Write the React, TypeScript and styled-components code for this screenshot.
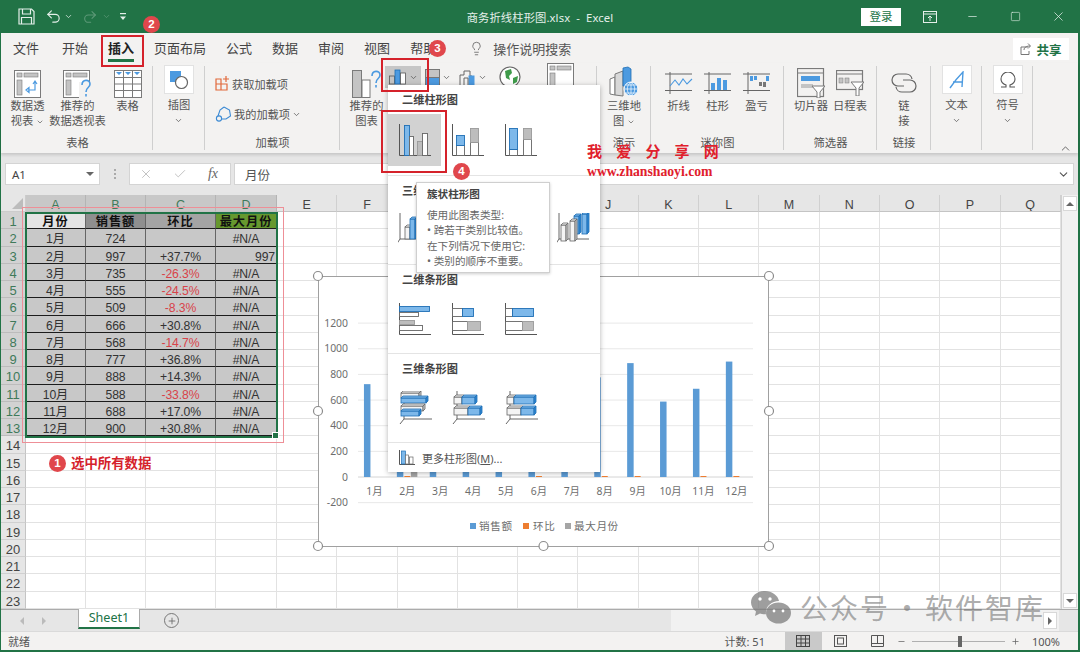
import React from 'react';
import styled, { createGlobalStyle } from 'styled-components';
import { Undo2, Redo2, Lightbulb, Minus, Square, X, ChevronDown, ChevronUp, Check, Plus } from 'lucide-react';

const GREEN = '#217346';
const FONT = `"Noto Sans", "Noto Sans CJK SC", sans-serif`;

const Global = createGlobalStyle`
  html, body { margin: 0; padding: 0; background: #fff; }
  * { box-sizing: border-box; }
`;

const Window = styled.div`
  position: relative; width: 1080px; height: 652px; overflow: hidden;
  display: flex; flex-direction: column; background: ${GREEN};
  font-family: ${FONT}; color: #444;
  padding: 0 2px 2px 1px;
`;

/* ---------- title bar ---------- */
const TitleBar = styled.header`
  height: 33px; margin: 0 -2px 0 -1px; background: ${GREEN}; color: #e4efe9;
  display: grid; grid-template-columns: 1fr auto 1fr; align-items: center; flex: none;
`;
const Quick = styled.div`display: flex; align-items: center; padding-left: 18px;`;
const QuickIcon = styled.span<{ $w: number; $dim?: boolean }>`
  width: ${p => p.$w}px; display: flex; align-items: center; opacity: ${p => (p.$dim ? 0.3 : 1)};
`;
const DocTitle = styled.div`font-size: 11.3px; letter-spacing: 0.1px; white-space: pre;`;
const WinControls = styled.div`display: flex; align-items: center; justify-content: flex-end;`;
const Login = styled.button`
  width: 40px; height: 18px; border: 0; padding: 0; background: #fff; color: ${GREEN};
  font: 11.5px ${FONT}; margin-right: 7px; line-height: 18px;
`;
const WinBtn = styled.span`width: 43px; display: flex; justify-content: center; color: #e4efe9;`;

/* ---------- tabs ---------- */
const TabRow = styled.nav`
  height: 30px; flex: none; display: flex; align-items: center; gap: 20px; padding-left: 12px; position: relative; background: #f3f2f1;
`;
const Tab = styled.span<{ $active?: boolean }>`
  position: relative; font-size: 13px; line-height: 30px; white-space: nowrap;
  color: ${p => (p.$active ? '#222' : '#444')}; font-weight: ${p => (p.$active ? 700 : 400)};
  &:first-child { margin-right: 3px; }
  ${p => p.$active && `&::after { content: ''; position: absolute; left: 0; right: 0; bottom: 1px; height: 3px; background: ${GREEN}; }`}
`;
const TellMe = styled.span`
  display: flex; align-items: center; gap: 9px; margin-left: 13px; font-size: 13px; color: #555; white-space: nowrap;
`;
const ShareBtn = styled.button`
  position: absolute; right: 9px; top: 5px; width: 56px; height: 22px; border: 0; background: #fff;
  display: flex; align-items: center; justify-content: center; gap: 4px; padding: 0;
  font: 700 12.5px ${FONT}; color: ${GREEN};
`;

/* ---------- ribbon ---------- */
const Ribbon = styled.section`
  position: relative; height: 90px; flex: none; display: flex; padding-left: 1px;
  box-shadow: 0 2px 3px rgba(0,0,0,.14); z-index: 1; background: #f3f2f1;
`;
const Group = styled.div<{ $w: number }>`
  width: ${p => p.$w}px; flex: none; display: flex; flex-direction: column; position: relative;
  &::after { content: ''; position: absolute; right: 0; top: 3px; bottom: 3px; width: 1px; background: #cfcfcf; }
`;
const GroupBody = styled.div`height: 71px; display: flex; align-items: flex-start; justify-content: center;`;
const GroupLabel = styled.div`height: 18px; line-height: 18px; font-size: 11.3px; text-align: center; color: #555;`;
const BigBtn = styled.div<{ $w: number; $top?: number }>`
  width: ${p => p.$w}px; flex: none; display: flex; flex-direction: column; align-items: center;
  padding-top: ${p => p.$top ?? 7}px;
`;
const BigIcon = styled.div`height: 28px; display: flex; align-items: center; justify-content: center;`;
const BoxIcon = styled.div`
  width: 30px; height: 29px; background: #fff; border: 1px solid #e2e2e2;
  display: flex; align-items: center; justify-content: center;
`;
const BtnLabel = styled.div<{ $gap?: number }>`
  margin-top: ${p => p.$gap ?? 0}px; font-size: 11.3px; line-height: 15px; text-align: center; white-space: nowrap; color: #555;
  svg { vertical-align: -1px; }
`;
const AddIns = styled.div`height: 71px; width: 135px; display: flex; padding: 12px 0 0 10px;`;
const AddInCol = styled.div`width: 99px; display: flex; flex-direction: column; gap: 12px;`;
const AddInRow = styled.div`display: flex; align-items: center; gap: 2px; font-size: 11.2px; white-space: nowrap; color: #555; height: 18px;`;
const AddInIcons = styled.div`display: flex; flex-direction: column; gap: 9px; margin-top: -6px; margin-left: 3px; height: 0;`;
const ChartGroupBody = styled.div`display: flex; align-items: flex-start; padding-left: 8px;`;
const SmallCharts = styled.div`display: flex; align-items: center; padding-top: 3px; gap: 4px;`;
const SmallChart = styled.span<{ $on?: boolean; $w: number }>`
  width: ${p => p.$w}px; height: 22px; display: flex; align-items: center; justify-content: ${p => (p.$on ? 'center' : 'flex-start')}; gap: 2px;
  background: ${p => (p.$on ? '#c6c6c6' : 'transparent')};
`;
const Collapse = styled.span`position: absolute; right: 6px; bottom: -2px; color: #555; display: flex;`;

/* ---------- formula bar ---------- */
const FormulaBar = styled.div`
  height: 42px; flex: none; background: #e6e6e6; padding: 10px 4px 10px 4px; display: flex; align-items: stretch;
`;
const NameBox = styled.div`
  width: 95px; background: #fff; border: 1px solid #d4d4d4; display: flex; align-items: center; justify-content: space-between;
  padding: 0 5px 0 6px; font-size: 11.5px; color: #444;
`;
const Grip = styled.div`
  width: 29px; display: flex; flex-direction: column; gap: 2px; align-items: center; justify-content: center;
  i { width: 2px; height: 2px; background: #aaa; display: block; }
`;
const FxBox = styled.div`
  width: 102px; background: #fff; border: 1px solid #d4d4d4; display: flex; align-items: center; justify-content: space-between; padding: 0 12px 0 9px;
  color: #b5b5b5; font-family: "Liberation Serif", serif; font-style: italic;
`;
const FxText = styled.span`font-size: 14px; color: #666;`;
const FormulaInput = styled.div`
  flex: 1; margin-left: 3px; background: #fff; border: 1px solid #d4d4d4; display: flex; align-items: center; justify-content: space-between;
  padding: 0 3px 0 10px; font-size: 12.5px; color: #555;
`;

/* ---------- sheet ---------- */
const SheetArea = styled.div`flex: none; height: 414px; display: flex; background: #fff;`;
const Grid = styled.div`
  width: 1060px; display: grid; flex: none;
  grid-template-columns: 25px 60px 60px 70px 61px repeat(13, 60.3px);
  grid-template-rows: 17px repeat(23, 17.26px);
`;
const Corner = styled.div`
  background: #e6e6e6; border-right: 1px solid #ccc; border-bottom: 1px solid #ccc; position: relative;
  &::after { content: ''; position: absolute; right: 2px; bottom: 2px; border-style: solid; border-width: 0 0 11px 11px; border-color: transparent transparent #bcbcbc transparent; }
`;
const ColHead = styled.div<{ $sel?: boolean }>`
  background: ${p => (p.$sel ? '#c8c8c8' : '#e6e6e6')}; color: ${p => (p.$sel ? '#3f7a5a' : '#444')};
  border-right: 1px solid ${p => (p.$sel ? '#b4b4b4' : '#d0d0d0')}; overflow: hidden;
  border-bottom: 1px solid #c4c4c4; text-align: center; font-size: 12.5px; line-height: 20px; font-family: "Liberation Sans", sans-serif;
`;
const RowHead = styled.div<{ $sel?: boolean }>`
  background: ${p => (p.$sel ? '#d2d2d2' : '#e6e6e6')}; color: ${p => (p.$sel ? '#3f7a5a' : '#444')};
  border-right: 1px solid #c4c4c4; border-bottom: 1px solid ${p => (p.$sel ? '#bcbcbc' : '#d0d0d0')}; overflow: hidden;
  text-align: center; font-size: 13px; line-height: 19px; font-family: "Liberation Sans", sans-serif;
`;
const Cell = styled.div`border-right: 1px solid #e2e2e2; border-bottom: 1px solid #e2e2e2;`;
const DataCell = styled.div<{ $fill?: string; $red?: boolean; $head?: boolean; $right?: boolean }>`
  background: ${p => p.$fill ?? '#c8c8c8'}; border-right: 1px solid #666; border-bottom: 1px solid #1c1c1c;
  color: ${p => (p.$red ? '#d8434a' : p.$head ? '#111' : '#333')}; font-weight: ${p => (p.$head ? 700 : 400)};
  letter-spacing: ${p => (p.$head ? '1px' : '-0.1px')};
  text-align: ${p => (p.$right ? 'right' : 'center')}; padding-right: ${p => (p.$right ? '1px' : '0')};
  font-size: 12.2px; line-height: 20.5px; white-space: nowrap; overflow: hidden;
  font-family: "Liberation Sans", "Noto Sans CJK SC", sans-serif;
`;
const VScroll = styled.div`
  width: 17px; flex: none; background: #f1f1f1; border-left: 1px solid #d0d0d0; display: flex; flex-direction: column; justify-content: space-between;
`;
const ScrollBtn = styled.div`
  height: 15px; background: #fff; border: 1px solid #d8d8d8; margin: 1px; display: flex; align-items: center; justify-content: center;
`;
const Arrow = styled.i<{ $dir: 'up' | 'down' | 'left' | 'right'; $color?: string }>`
  display: block; width: 0; height: 0; border-style: solid;
  ${p => {
    const c = p.$color ?? '#666';
    if (p.$dir === 'up') return `border-width: 0 4px 4px; border-color: transparent transparent ${c};`;
    if (p.$dir === 'down') return `border-width: 4px 4px 0; border-color: ${c} transparent transparent;`;
    if (p.$dir === 'left') return `border-width: 4px 4px 4px 0; border-color: transparent ${c} transparent transparent;`;
    return `border-width: 4px 0 4px 4px; border-color: transparent transparent transparent ${c};`;
  }}
`;

/* ---------- sheet tabs / status ---------- */
const TabStrip = styled.div`
  height: 22px; flex: none; background: #e6e6e6; border-top: 1px solid #ababab; display: flex; align-items: flex-start;
`;
const TabNav = styled.div`width: 77px; height: 21px; display: flex; align-items: center; gap: 18px; padding-left: 19px; flex: none;`;
const SheetTab = styled.div`
  width: 62px; height: 20px; margin-top: -1px; background: #fff; border: 1px solid #ababab; border-top: 0; border-bottom: 2px solid ${GREEN};
  color: ${GREEN}; font-size: 12.6px; line-height: 17px; text-align: center; flex: none; font-weight: 400;
`;
const AddSheet = styled.div`
  width: 15px; height: 15px; border: 1px solid #777; border-radius: 50%; margin: 3px 0 0 24px; color: #666; display: flex; align-items: center; justify-content: center; flex: none;
`;
const HScroll = styled.div`
  margin-left: auto; width: 388px; height: 21px; background: #f1f1f1; display: flex; justify-content: flex-end; align-items: center; padding-right: 2px;
`;
const HScrollBtn = styled.div`
  width: 14px; height: 17px; background: #fff; border: 1px solid #d8d8d8; display: flex; align-items: center; justify-content: center;
`;
const HSpacer = styled.div`width: 19px; flex: none; background: #e6e6e6; height: 21px;`;
const StatusBar = styled.footer`
  height: 19px; flex: none; background: #f3f2f1; border-top: 1px solid #dadada; display: flex; align-items: center; font-size: 11px; color: #555; padding-left: 7px;
`;
const StatusRight = styled.div`margin-left: auto; display: flex; align-items: center; height: 100%;`;
const Count = styled.span`margin-right: 20px; font-size: 11px;`;
const ViewBtn = styled.span<{ $on?: boolean }>`
  width: 37px; height: 100%; display: flex; align-items: center; justify-content: center; background: ${p => (p.$on ? '#c9c9c9' : 'transparent')};
`;
const ZoomSlider = styled.div`
  display: flex; align-items: center; gap: 6px; margin-left: 1px; color: #666;
`;
const SliderTrack = styled.div`
  position: relative; width: 93px; height: 1px; background: #b0b0b0;
  &::after { content: ''; position: absolute; left: 46px; top: -5px; width: 4px; height: 11px; background: #666; }
`;
const ZoomPct = styled.span`margin: 0 18px 0 12px; font-size: 11px;`;

/* ---------- overlays ---------- */
const ChartLayer = styled.svg`position: absolute; left: 311px; top: 270px; width: 463px; height: 282px; z-index: 2;`;
const RedBox = styled.div<{ $x: number; $y: number; $w: number; $h: number; $thin?: boolean }>`
  position: absolute; left: ${p => p.$x}px; top: ${p => p.$y}px; width: ${p => p.$w}px; height: ${p => p.$h}px;
  border: ${p => (p.$thin ? '1px solid #ee8f97' : '2px solid #d5222b')}; z-index: 6; pointer-events: none;
`;
const Badge = styled.div<{ $x: number; $y: number }>`
  position: absolute; left: ${p => p.$x - 8}px; top: ${p => p.$y - 8}px; width: 17px; height: 17px; border-radius: 50%;
  background: #e0474c; color: #fff; font: 700 11.5px/17px "Liberation Sans", sans-serif; text-align: center; z-index: 7;
`;
const Selection = styled.div`
  position: absolute; left: 25px; top: 212px; width: 253px; height: 226px; border: 2px solid ${GREEN}; z-index: 3;
  &::after { content: ''; position: absolute; right: -3px; bottom: -3px; width: 5px; height: 5px; background: ${GREEN}; border: 1px solid #fff; }
`;
const Note = styled.div`
  position: absolute; left: 71px; top: 454px; font-size: 13.4px; font-weight: 700; line-height: 18px; color: #d5222b; z-index: 4; white-space: nowrap;
`;
const Menu = styled.div`
  position: absolute; left: 388px; top: 85px; width: 212px; height: 387px; background: #fff; z-index: 4;
  box-shadow: 0 1px 5px rgba(0,0,0,.3); display: flex; flex-direction: column;
`;
const MenuSection = styled.div<{ $h: number }>`height: ${p => p.$h}px; border-bottom: 1px solid #e4e4e4; flex: none;`;
const MenuHead = styled.div<{ $first?: boolean }>`
  height: ${p => (p.$first ? 29 : 28)}px; line-height: ${p => (p.$first ? 30 : 29)}px; padding-left: 14px; font-size: 11.2px; font-weight: 700; color: #444;
`;
const IconRow = styled.div`display: flex;`;
const IconCell = styled.div<{ $on?: boolean }>`
  width: 53px; height: 52px; display: flex; align-items: center; justify-content: center; background: ${p => (p.$on ? '#d2d2d2' : 'transparent')};
`;
const MenuFoot = styled.div`
  flex: 1; display: flex; align-items: center; gap: 7px; padding-left: 11px; font-size: 11px; color: #555;
  u { text-underline-offset: 1px; }
`;
const Tooltip = styled.div`
  position: absolute; left: 416px; top: 182px; width: 134px; height: 91px; background: #fff; border: 1px solid #cfcfcf; z-index: 5;
  padding: 3px 0 0 10px; box-shadow: 0 1px 3px rgba(0,0,0,.2); color: #666; font-size: 10.6px; line-height: 15.4px; white-space: nowrap;
`;
const TipTitle = styled.div`font-weight: 700; color: #444; margin-bottom: 6px; line-height: 16px;`;
const Brand = styled.div`
  position: absolute; left: 587px; top: 141px; width: 130px; z-index: 6; color: #e0202c; font-weight: 700;
`;
const BrandCn = styled.div`font: 700 15px/20px "Noto Sans CJK SC", sans-serif; letter-spacing: 14.2px; white-space: nowrap;`;
const BrandUrl = styled.div`font: 700 13.7px/16px "Liberation Serif", serif; margin-top: 3px; white-space: nowrap;`;
const Watermark = styled.div`
  position: absolute; left: 750px; top: 589px; display: flex; align-items: center; gap: 8px; z-index: 7; color: rgba(120,120,120,.62);
  font: 400 28px/36px "Noto Sans CJK SC", sans-serif; letter-spacing: 2px; white-space: pre;
`;
const WaterDot = styled.span`margin: 0 2px 0 3px;`;

/* ---------- drawings ---------- */
const G = '#7a7a7a', LG = '#c4c4c4', B = '#4c9ae0', DB = '#1f6fb5';

const SaveIcon = () => (
  <svg width="17" height="17" viewBox="0 0 17 17" fill="none" stroke="#e4efe9" strokeWidth="1.2">
    <path d="M1 1h12.5L16 3.5V16H1z" /><path d="M4.5 1v5h8V1M3.5 16V9.5h10V16" />
  </svg>
);
const CustomizeIcon = () => (
  <svg width="8" height="8" viewBox="0 0 8 8" fill="#e4efe9"><rect x="1" y="0" width="6" height="1.2" /><path d="M1 3.500h6L4 7z" /></svg>
);
const PivotIcon = () => (
  <svg width="28" height="28" viewBox="0 0 28 28" fill="none">
    <rect x=".5" y=".5" width="26" height="27" fill="#fff" stroke={G} />
    <rect x="3" y="3" width="5" height="4" fill={LG} stroke={G} strokeWidth=".6" />
    <rect x="10" y="3" width="14" height="4" fill={LG} stroke={G} strokeWidth=".6" />
    <rect x="3" y="10" width="5" height="15" fill={LG} stroke={G} strokeWidth=".6" />
    <path d="M21 12v8h-7M12 20l3-2.5v5zM19 14l2-3 2 3" stroke={B} strokeWidth="1.2" />
  </svg>
);
const RecPivotIcon = () => (
  <svg width="30" height="28" viewBox="0 0 30 28" fill="none">
    <rect x=".5" y=".5" width="26" height="27" fill="#fff" stroke={G} />
    <rect x="3" y="3" width="5" height="4" fill={LG} stroke={G} strokeWidth=".6" />
    <rect x="10" y="3" width="14" height="4" fill={LG} stroke={G} strokeWidth=".6" />
    <rect x="3" y="10" width="5" height="15" fill={LG} stroke={G} strokeWidth=".6" />
    <rect x="16" y="12" width="14" height="16" fill="#f3f2f1" />
    <path d="M19 15c0-6 8-6 8-1 0 4-4 3-4 8M23 24v2.5" stroke={B} strokeWidth="1.6" />
  </svg>
);
const TableIcon = () => (
  <svg width="28" height="28" viewBox="0 0 28 28" fill="none" stroke={G}>
    <rect x=".5" y=".5" width="27" height="27" fill="#fff" />
    <path d="M.5 7.5h27M.5 14h27M.5 20.5h27M9.5.5v27M18.5.5v27" />
    <path d="M2 2h6l-3 3zM11 2h6l-3 3zM20 2h6l-3 3z" fill={B} stroke="none" />
  </svg>
);
const ShapesIcon = () => (
  <svg width="20" height="20" viewBox="0 0 20 20" fill="none">
    <rect x="1" y="1" width="11" height="11" fill={B} />
    <circle cx="12.5" cy="12.5" r="6" fill="#fff" stroke="#666" strokeWidth="1.2" />
  </svg>
);
const GetAddIn = () => (
  <svg width="15" height="16" viewBox="0 0 15 16" fill="none" stroke="#e2683b" strokeWidth="1.2">
    <path d="M1 3h5v5H1zM1 8h5v6H1zM6 8h6v6H6z" /><path d="M11 0v6M8 3h6" />
  </svg>
);
const MyAddIn = () => (
  <svg width="17" height="17" viewBox="0 0 17 17" fill="none" stroke="#3c8ad4" strokeWidth="1.1">
    <path d="M9 1l5.5 3 1 6-4.5 3H7" /><circle cx="4" cy="12.5" r="2.6" /><path d="M9 1L5 4 3 10" />
  </svg>
);
const VisioIcon = () => (
  <svg width="14" height="14" viewBox="0 0 14 14"><path d="M3 3l4-3 4 3 3 4-3 4-4 3-4-3-3-4z" fill="#2f6db8" /><rect y="3.5" width="7" height="7" fill="#1d4f91" /></svg>
);
const BingIcon = () => (
  <svg width="14" height="14" viewBox="0 0 14 14"><rect width="13" height="14" fill="#f5b625" /><path d="M4 2v9l5-2.500-2.500-1.200" fill="none" stroke="#fff" strokeWidth="1.5" /></svg>
);
const PeopleIcon = () => (
  <svg width="14" height="14" viewBox="0 0 14 14"><rect width="13" height="14" fill="#2a8c62" /><rect x="1" y="2" width="11" height="2" fill="#cfe8dc" /><circle cx="7" cy="8" r="2" fill="#fff" /><path d="M3 13c.5-3 7-3 7.500 0z" fill="#fff" /></svg>
);
const RecChart = () => (
  <svg width="30" height="28" viewBox="0 0 30 28" fill="none">
    <rect x=".5" y=".5" width="9" height="27" fill={LG} stroke={G} />
    <rect x="10" y="10" width="8" height="17.500" fill="#fff" stroke={G} />
    <path d="M20 6c0-6 8-6 8-1 0 4-4 3-4 8M24 15v2.500" stroke={B} strokeWidth="1.6" />
  </svg>
);
const MiniCol = () => (
  <svg width="18" height="16" viewBox="0 0 18 16" fill="none">
    <rect x=".5" y="7" width="5" height="8" fill={LG} stroke="#555" strokeWidth=".8" />
    <rect x="6" y="1" width="5" height="14" fill={B} stroke={DB} strokeWidth=".8" />
    <rect x="11.500" y="4" width="5" height="11" fill="#fff" stroke="#555" strokeWidth=".8" />
  </svg>
);
const MiniStack = () => (
  <svg width="15" height="17" viewBox="0 0 15 17" fill="none">
    <rect x=".5" y=".5" width="14" height="8" fill={LG} stroke="#777" /><rect x=".5" y="8.500" width="14" height="8" fill={B} stroke="#777" />
  </svg>
);
const MiniWater = () => (
  <svg width="17" height="17" viewBox="0 0 17 17" fill="none" stroke="#666">
    <path d="M1 16V6h4V2h6v5h2" /><rect x="10" y="7" width="5" height="9" fill={B} stroke={B} /><path d="M5 16V9h4v7" />
  </svg>
);
const MapIcon = () => (
  <svg width="22" height="24" viewBox="0 0 22 24">
    <circle cx="11" cy="12" r="10" fill="#fff" stroke="#666" strokeWidth="1.2" />
    <path d="M6 6l6-2 1 4-3 3 1 4-4-2zM14 13l5-2-1 6-4 2z" fill="#3f9b4a" />
  </svg>
);
const PivotChart = () => (
  <svg width="27" height="28" viewBox="0 0 27 28" fill="none">
    <rect x=".5" y=".5" width="26" height="27" fill="#fff" stroke={G} />
    <rect x="3" y="3" width="5" height="4" fill={LG} stroke={G} strokeWidth=".6" />
    <rect x="10" y="3" width="14" height="4" fill={LG} stroke={G} strokeWidth=".6" />
    <rect x="3" y="10" width="5" height="15" fill={LG} stroke={G} strokeWidth=".6" />
  </svg>
);
const Map3D = () => (
  <svg width="30" height="32" viewBox="0 0 30 32" fill="none">
    <path d="M1 13l5-2v18l-5-1z" fill="#fff" stroke={G} />
    <path d="M6 8l8-3v25l-8-1z" fill="#d8d8d8" stroke={G} />
    <path d="M14 2l5-1 3 2v17h-8z" fill={B} stroke={DB} strokeWidth=".8" />
    <circle cx="22" cy="23" r="7" fill={B} stroke="#fff" />
    <path d="M15 23h14M22 16v14M17 19h10M17 27h10M22 16c-5 4-5 10 0 14M22 16c5 4 5 10 0 14" stroke="#fff" strokeWidth=".7" />
  </svg>
);
const Spark = ({ kind }: { kind: 'line' | 'col' | 'wl' }) => (
  <svg width="28" height="22" viewBox="0 0 28 22" fill="none">
    <path d="M0 2h27M0 18.500h27M5 0v22" stroke="#666" strokeWidth="1" />
    {kind === 'line' && <path d="M5 14l5-6 4 5 4-6 4 5 5-5" stroke={B} strokeWidth="1.100" />}
    {kind === 'col' && <path d="M7 11h4v7H7zM13 6h4v12h-4zM19 8h4v10h-4z" fill={B} />}
    {kind === 'wl' && <path d="M7 4h3v5H7zM11 4h3v4h-3zM23 4h3v5h-3z" fill={B} />}
    {kind === 'wl' && <path d="M16 10h3v4h-3zM20 10h3v5h-3z" fill="#777" />}
  </svg>
);
const Slicer = () => (
  <svg width="28" height="30" viewBox="0 0 28 30" fill="none">
    <rect x=".5" y=".5" width="26" height="28" fill="#f3f2f1" stroke={G} strokeWidth="1.200" />
    <path d="M1 5h26" stroke={G} />
    <rect x="4" y="8" width="19" height="5" fill={B} />
    <rect x="4" y="16" width="12" height="4" fill={LG} />
    <path d="M15 18h13l-5 6v6h-3v-6z" fill="#fff" stroke={G} />
  </svg>
);
const Timeline = () => (
  <svg width="28" height="26" viewBox="0 0 28 26" fill="none">
    <rect x=".5" y=".5" width="26" height="19" fill="#f3f2f1" stroke={G} strokeWidth="1.200" />
    <path d="M1 4h26" stroke={G} />
    <rect x="3" y="8" width="4" height="5" fill={LG} stroke={G} strokeWidth=".5" /><rect x="9" y="8" width="4" height="5" fill={LG} stroke={G} strokeWidth=".5" />
    <path d="M15 12h13l-5 6v8h-3v-8z" fill="#fff" stroke={G} />
  </svg>
);
const LinkIcon = () => (
  <svg width="28" height="20" viewBox="0 0 28 20" fill="none" stroke="#666" strokeWidth="1.200">
    <path d="M14 13H8a6 6 0 010-12h8a6 6 0 016 5" /><path d="M13 7h7a6 6 0 010 12h-8a6 6 0 01-6-5" />
  </svg>
);
const TextIcon = () => (
  <svg width="16" height="18" viewBox="0 0 16 18" fill="none" stroke={B} strokeWidth="1.400">
    <path d="M1 17C5 11 10 5 14 1l-1 15M4 11h9" />
  </svg>
);
const OmegaIcon = () => (
  <svg width="16" height="16" viewBox="0 0 16 16" fill="none" stroke="#555" strokeWidth="1.100">
    <path d="M1 15h5v-2C3 12 1 9.500 1 7a7 7 0 0114 0c0 2.500-2 5-5 6v2h5" />
  </svg>
);

type Bar = [number, number, number, number, string?];
const AXIS = '#555';
const Glyph = ({ bars }: { bars: Bar[] }) => (
  <svg width="32" height="32" viewBox="0 0 32 32">
    <path d="M.5 0v31.500H32" fill="none" stroke={AXIS} strokeWidth="1" />
    {bars.map(([x, y, w, h, k], i) => (
      <rect key={i} x={x + .5} y={y + .5} width={w} height={h}
        fill={k === 'b' ? '#7db8ea' : k === 'g' ? '#bdbdbd' : '#fff'}
        stroke={k === 'b' ? DB : k === 'g' ? '#9a9a9a' : '#666'} strokeWidth=".9" />
    ))}
  </svg>
);
const prism = (x: number, y: number, w: number, h: number, k: string, key: string) => {
  const fill = k === 'b' ? '#7db8ea' : '#f4f4f4';
  const st = k === 'b' ? DB : '#666';
  return (
    <g key={key} stroke={st} strokeWidth=".8">
      <rect x={x} y={y} width={w} height={h} fill={fill} />
      <path d={`M${x} ${y}l2-2h${w}l-2 2z`} fill={fill} />
      <path d={`M${x + w} ${y}l2-2v${h}l-2 2z`} fill={k === 'b' ? '#2d86d2' : '#ccc'} />
    </g>
  );
};
const Glyph3D = ({ parts }: { parts: [number, number, number, number, string][] }) => (
  <svg width="34" height="34" viewBox="0 0 34 34">
    <path d="M2 0v26l-4 6M2 26h30" fill="none" stroke={AXIS} strokeWidth=".9" />
    {parts.map((p, i) => prism(p[0], p[1], p[2], p[3], p[4], String(i)))}
  </svg>
);
const Glyph3DBar = ({ parts }: { parts: [number, number, number, number, string][] }) => (
  <svg width="34" height="34" viewBox="0 0 34 34">
    <path d="M6 0v28l-4 5M6 28h28" fill="none" stroke={AXIS} strokeWidth=".9" />
    {parts.map((p, i) => prism(p[0], p[1], p[2], p[3], p[4], String(i)))}
  </svg>
);

/* ---------- data ---------- */
const columns = 'ABCDEFGHIJKLMNOPQ'.split('');
const rows: [string, string, string, string][] = [
  ['1月', '724', '', '#N/A'], ['2月', '997', '+37.7%', '997'], ['3月', '735', '-26.3%', '#N/A'],
  ['4月', '555', '-24.5%', '#N/A'], ['5月', '509', '-8.3%', '#N/A'], ['6月', '666', '+30.8%', '#N/A'],
  ['7月', '568', '-14.7%', '#N/A'], ['8月', '777', '+36.8%', '#N/A'], ['9月', '888', '+14.3%', '#N/A'],
  ['10月', '588', '-33.8%', '#N/A'], ['11月', '688', '+17.0%', '#N/A'], ['12月', '900', '+30.8%', '#N/A'],
];

const Sheet = () => (
  <Grid>
    <Corner />
    {columns.map((c, i) => <ColHead key={c} $sel={i < 4}>{c}</ColHead>)}
    {Array.from({ length: 23 }, (_, r) => (
      <React.Fragment key={r}>
        <RowHead $sel={r < 13}>{r + 1}</RowHead>
        {r === 0 && (
          <>
            <DataCell $head $fill="#e4e4e4">月份</DataCell>
            <DataCell $head $fill="#8f8f8f">销售额</DataCell>
            <DataCell $head $fill="#a4a4a4">环比</DataCell>
            <DataCell $head $fill="#66982f">最大月份</DataCell>
          </>
        )}
        {r > 0 && r < 13 && rows[r - 1].map((v, i) => (
          <DataCell key={i} $red={i === 2 && v.startsWith('-')} $right={i === 3 && v === '997'}>{v}</DataCell>
        ))}
        {Array.from({ length: r < 13 ? 13 : 17 }, (_, c) => <Cell key={c} />)}
      </React.Fragment>
    ))}
  </Grid>
);

const Chart = () => {
  const yTicks = [1200, 1000, 800, 600, 400, 200, 0, -200];
  const yOf = (v: number) => 477 - v * 0.12825;
  const cx = (i: number) => 358 + 32.9 * (i + .5);
  const handles: [number, number][] = [[318, 276], [543.500, 276], [769, 276], [318, 411], [769, 411], [318, 546], [543.500, 546], [769, 546]];
  return (
    <ChartLayer viewBox="311 270 463 282" fontFamily={`"Noto Sans", "Noto Sans CJK SC", sans-serif`}>
      <rect x="318.500" y="276.500" width="450" height="270" fill="#fff" stroke="#a0a0a0" />
      {yTicks.map(v => (
        <g key={v}>
          <line x1="358" x2="753" y1={yOf(v)} y2={yOf(v)} stroke={v === 0 ? '#d4d4d4' : '#e8e8e8'} />
          <text x="348" y={yOf(v) + 3.500} textAnchor="end" fontSize="10.400" fill="#6e6e6e">{v}</text>
        </g>
      ))}
      {rows.map((r, i) => {
        const sales = +r[1];
        const pos = r[2].startsWith('+');
        return (
          <g key={r[0]}>
            <rect x={cx(i) - 10.500} y={yOf(sales)} width="6.500" height={sales * 0.12825} fill="#5b9bd5" />
            {pos && <rect x={cx(i) - 3} y="476" width="6" height="1" fill="#ed7d31" />}
            {r[3] === '997' && <rect x={cx(i) + 3.500} y={yOf(997)} width="6.500" height={997 * 0.12825} fill="#a5a5a5" />}
            <text x={cx(i)} y="495" textAnchor="middle" fontSize="10.400" fill="#6e6e6e">{r[0]}</text>
          </g>
        );
      })}
      <rect x="470" y="523" width="6" height="6" fill="#5b9bd5" />
      <text x="479" y="530" fontSize="10.600" fill="#6e6e6e" letterSpacing=".6">销售额</text>
      <rect x="523" y="523" width="6" height="6" fill="#ed7d31" />
      <text x="533" y="530" fontSize="10.600" fill="#6e6e6e" letterSpacing=".6">环比</text>
      <rect x="565" y="523" width="6" height="6" fill="#a5a5a5" />
      <text x="574" y="530" fontSize="10.600" fill="#6e6e6e" letterSpacing=".6">最大月份</text>
      {handles.map(([x, y]) => (
        <circle key={`${x}-${y}`} cx={x} cy={y} r="4.500" fill="#fff" stroke="#8c8c8c" strokeWidth="1.200" />
      ))}
    </ChartLayer>
  );
};

const Chev = ({ size = 9 }: { size?: number }) => <ChevronDown size={size} color="#555" strokeWidth={2} />;

export default function App() {
  return (
    <Window>
      <Global />
      <TitleBar>
        <Quick>
          <QuickIcon $w={27}><SaveIcon /></QuickIcon>
          <QuickIcon $w={19}><Undo2 size={17} strokeWidth={1.6} /></QuickIcon>
          <QuickIcon $w={18}><ChevronDown size={9} /></QuickIcon>
          <QuickIcon $w={20} $dim><Redo2 size={16} strokeWidth={1.6} /></QuickIcon>
          <QuickIcon $w={17} $dim><ChevronDown size={9} /></QuickIcon>
          <QuickIcon $w={10}><CustomizeIcon /></QuickIcon>
        </Quick>
        <DocTitle>商务折线柱形图.xlsx  -  Excel</DocTitle>
        <WinControls>
          <Login>登录</Login>
          <WinBtn>
            <svg width="14" height="12" viewBox="0 0 14 12" fill="none" stroke="#e4efe9"><rect x=".5" y=".5" width="13" height="11" /><path d="M.5 3h13M7 10V5M5 7l2-2 2 2" /></svg>
          </WinBtn>
          <WinBtn><Minus size={13} strokeWidth={1.3} /></WinBtn>
          <WinBtn><Square size={11} strokeWidth={1.3} /></WinBtn>
          <WinBtn><X size={15} strokeWidth={1.2} /></WinBtn>
        </WinControls>
      </TitleBar>

      <TabRow>
        <Tab>文件</Tab><Tab>开始</Tab><Tab $active>插入</Tab><Tab>页面布局</Tab><Tab>公式</Tab>
        <Tab>数据</Tab><Tab>审阅</Tab><Tab>视图</Tab><Tab>帮助</Tab>
        <TellMe><Lightbulb size={15} strokeWidth={1.2} color="#555" />操作说明搜索</TellMe>
        <ShareBtn>
          <svg width="12" height="12" viewBox="0 0 12 12" fill="none" stroke="#777"><path d="M8 4H1v7.500h8V8M4 7c0-3 3-4 6-4M8 .5L10.500 3 8 5.500" /></svg>
          共享
        </ShareBtn>
      </TabRow>

      <Ribbon>
        <Group $w={151}>
          <GroupBody>
            <BigBtn $w={50}><BigIcon><PivotIcon /></BigIcon><BtnLabel $gap={0}>数据透<br />视表 <Chev size={8} /></BtnLabel></BigBtn>
            <BigBtn $w={50}><BigIcon><RecPivotIcon /></BigIcon><BtnLabel>推荐的<br />数据透视表</BtnLabel></BigBtn>
            <BigBtn $w={50}><BigIcon><TableIcon /></BigIcon><BtnLabel>表格</BtnLabel></BigBtn>
          </GroupBody>
          <GroupLabel>表格</GroupLabel>
        </Group>
        <Group $w={52}>
          <GroupBody>
            <BigBtn $w={50} $top={2}><BoxIcon><ShapesIcon /></BoxIcon><BtnLabel $gap={3}>插图<br /><Chev /></BtnLabel></BigBtn>
          </GroupBody>
          <GroupLabel />
        </Group>
        <Group $w={135}>
          <AddIns>
            <AddInCol>
              <AddInRow><GetAddIn />获取加载项</AddInRow>
              <AddInRow><MyAddIn />我的加载项<Chev /></AddInRow>
            </AddInCol>
            <AddInIcons><VisioIcon /><BingIcon /><PeopleIcon /></AddInIcons>
          </AddIns>
          <GroupLabel>加载项</GroupLabel>
        </Group>
        <Group $w={257}>
          <ChartGroupBody>
            <BigBtn $w={37}><BigIcon><RecChart /></BigIcon><BtnLabel>推荐的<br />图表</BtnLabel></BigBtn>
            <SmallCharts>
              <SmallChart $on $w={36}><MiniCol /><Chev /></SmallChart>
              <SmallChart $w={30}><MiniStack /><Chev /></SmallChart>
              <SmallChart $w={36}><MiniWater /><Chev /></SmallChart>
              <SmallChart $w={44}><MapIcon /></SmallChart>
              <SmallChart $w={30}><PivotChart /></SmallChart>
            </SmallCharts>
          </ChartGroupBody>
        </Group>
        <Group $w={54}>
          <GroupBody>
            <BigBtn $w={50} $top={5}><BigIcon><Map3D /></BigIcon><BtnLabel $gap={2}>三维地<br />图 <Chev size={8} /></BtnLabel></BigBtn>
          </GroupBody>
          <GroupLabel>演示</GroupLabel>
        </Group>
        <Group $w={133}>
          <GroupBody>
            <BigBtn $w={39} $top={6}><BigIcon><Spark kind="line" /></BigIcon><BtnLabel $gap={1}>折线</BtnLabel></BigBtn>
            <BigBtn $w={39} $top={6}><BigIcon><Spark kind="col" /></BigIcon><BtnLabel $gap={1}>柱形</BtnLabel></BigBtn>
            <BigBtn $w={39} $top={6}><BigIcon><Spark kind="wl" /></BigIcon><BtnLabel $gap={1}>盈亏</BtnLabel></BigBtn>
          </GroupBody>
          <GroupLabel>迷你图</GroupLabel>
        </Group>
        <Group $w={93}>
          <GroupBody>
            <BigBtn $w={39} $top={6}><BigIcon><Slicer /></BigIcon><BtnLabel $gap={1}>切片器</BtnLabel></BigBtn>
            <BigBtn $w={39} $top={6}><BigIcon><Timeline /></BigIcon><BtnLabel $gap={1}>日程表</BtnLabel></BigBtn>
          </GroupBody>
          <GroupLabel>筛选器</GroupLabel>
        </Group>
        <Group $w={54}>
          <GroupBody>
            <BigBtn $w={40} $top={6}><BigIcon><LinkIcon /></BigIcon><BtnLabel $gap={1}>链<br />接</BtnLabel></BigBtn>
          </GroupBody>
          <GroupLabel>链接</GroupLabel>
        </Group>
        <Group $w={51}>
          <GroupBody>
            <BigBtn $w={40} $top={2}><BoxIcon><TextIcon /></BoxIcon><BtnLabel $gap={3}>文本<br /><Chev /></BtnLabel></BigBtn>
          </GroupBody>
        </Group>
        <Group $w={51}>
          <GroupBody>
            <BigBtn $w={40} $top={2}><BoxIcon><OmegaIcon /></BoxIcon><BtnLabel $gap={3}>符号<br /><Chev /></BtnLabel></BigBtn>
          </GroupBody>
        </Group>
        <Collapse><ChevronUp size={13} strokeWidth={1.6} /></Collapse>
      </Ribbon>

      <FormulaBar>
        <NameBox>A1<Arrow $dir="down" $color="#666" /></NameBox>
        <Grip><i /><i /><i /></Grip>
        <FxBox><X size={14} strokeWidth={1.4} /><Check size={14} strokeWidth={1.4} /><FxText>fx</FxText></FxBox>
        <FormulaInput>月份<ChevronDown size={13} color="#555" strokeWidth={2} /></FormulaInput>
      </FormulaBar>

      <SheetArea>
        <Sheet />
        <VScroll>
          <ScrollBtn><Arrow $dir="up" /></ScrollBtn>
          <ScrollBtn><Arrow $dir="down" /></ScrollBtn>
        </VScroll>
      </SheetArea>

      <TabStrip>
        <TabNav><Arrow $dir="left" $color="#bbb" /><Arrow $dir="right" $color="#bbb" /></TabNav>
        <SheetTab>Sheet1</SheetTab>
        <AddSheet><Plus size={10} /></AddSheet>
        <HScroll><HScrollBtn><Arrow $dir="right" /></HScrollBtn></HScroll>
        <HSpacer />
      </TabStrip>

      <StatusBar>
        就绪
        <StatusRight>
          <Count>计数: 51</Count>
          <ViewBtn $on>
            <svg width="14" height="12" viewBox="0 0 14 12" fill="none" stroke="#444"><rect x=".5" y=".5" width="13" height="11" /><path d="M.5 4h13M.5 8h13M5 .5v11M9.500.5v11" /></svg>
          </ViewBtn>
          <ViewBtn>
            <svg width="13" height="12" viewBox="0 0 13 12" fill="none" stroke="#555"><rect x=".5" y=".5" width="12" height="11" /><rect x="3.500" y="3" width="6" height="6" /></svg>
          </ViewBtn>
          <ViewBtn>
            <svg width="13" height="12" viewBox="0 0 13 12" fill="none" stroke="#555"><path d="M.5 11.500V.5h12v11zM.5 8.500h12M6.500.5v8" /></svg>
          </ViewBtn>
          <ZoomSlider><Minus size={9} /><SliderTrack /><Plus size={9} /></ZoomSlider>
          <ZoomPct>100%</ZoomPct>
        </StatusRight>
      </StatusBar>

      {/* floating chart and selection over the sheet */}
      <RedBox $thin $x={22} $y={207} $w={262} $h={236} />
      <Selection />
      <Note>选中所有数据</Note>
      <Chart />

      <Menu>
        <MenuSection $h={91}>
          <MenuHead $first>二维柱形图</MenuHead>
          <IconRow>
            <IconCell $on><Glyph bars={[[5, 1, 5, 30, 'b'], [10, 12, 4, 19], [18, 17, 5, 14, 'g'], [23, 9, 5, 22]]} /></IconCell>
            <IconCell><Glyph bars={[[4, 21, 8, 10], [4, 11, 8, 10, 'b'], [18, 18, 8, 13], [18, 4, 8, 14, 'g']]} /></IconCell>
            <IconCell><Glyph bars={[[4, 25, 8, 6], [4, 4, 8, 21, 'b'], [18, 15, 8, 16], [18, 4, 8, 11, 'g']]} /></IconCell>
          </IconRow>
        </MenuSection>
        <MenuSection $h={89}>
          <MenuHead>三维柱形图</MenuHead>
          <IconRow>
            <IconCell><Glyph3D parts={[[7, 14, 5, 12, 'w'], [12, 6, 5, 20, 'b'], [20, 12, 5, 14, 'w'], [25, 8, 5, 18, 'b']]} /></IconCell>
            <IconCell><Glyph3D parts={[[7, 14, 7, 12, 'w'], [7, 6, 7, 8, 'b'], [19, 14, 7, 12, 'w'], [19, 4, 7, 10, 'b']]} /></IconCell>
            <IconCell><Glyph3D parts={[[7, 18, 7, 8, 'w'], [7, 4, 7, 14, 'b'], [19, 14, 7, 12, 'w'], [19, 4, 7, 10, 'b']]} /></IconCell>
            <IconCell><Glyph3D parts={[[17, 3, 5, 18, 'b'], [25, 1, 5, 20, 'b'], [4, 12, 5, 16, 'w'], [13, 8, 5, 20, 'w']]} /></IconCell>
          </IconRow>
        </MenuSection>
        <MenuSection $h={89}>
          <MenuHead>二维条形图</MenuHead>
          <IconRow>
            <IconCell><Glyph bars={[[0, 3, 30, 5, 'b'], [0, 9, 19, 4], [0, 17, 15, 4, 'g'], [0, 22, 23, 5]]} /></IconCell>
            <IconCell><Glyph bars={[[0, 5, 10, 8], [10, 5, 11, 8, 'b'], [0, 18, 15, 9], [15, 18, 13, 9, 'g']]} /></IconCell>
            <IconCell><Glyph bars={[[0, 5, 7, 8], [7, 5, 21, 8, 'b'], [0, 18, 17, 9], [17, 18, 11, 9, 'g']]} /></IconCell>
          </IconRow>
        </MenuSection>
        <MenuSection $h={89}>
          <MenuHead>三维条形图</MenuHead>
          <IconRow>
            <IconCell><Glyph3DBar parts={[[3, 2, 18, 5, 'w'], [3, 7, 25, 5, 'b'], [3, 15, 22, 5, 'w'], [3, 20, 18, 5, 'b']]} /></IconCell>
            <IconCell><Glyph3DBar parts={[[3, 6, 8, 7, 'w'], [11, 6, 13, 7, 'b'], [3, 17, 14, 7, 'w'], [17, 17, 12, 7, 'b']]} /></IconCell>
            <IconCell><Glyph3DBar parts={[[3, 6, 7, 7, 'w'], [10, 6, 20, 7, 'b'], [3, 17, 14, 7, 'w'], [17, 17, 13, 7, 'b']]} /></IconCell>
          </IconRow>
        </MenuSection>
        <MenuFoot>
          <svg width="16" height="15" viewBox="0 0 16 15">
            <path d="M.5 0v14.500H16" fill="none" stroke="#555" />
            <rect x="2.500" y="1" width="4" height="13" fill="#7db8ea" stroke={DB} strokeWidth=".7" />
            <rect x="6.500" y="5" width="3" height="9" fill="#fff" stroke="#666" strokeWidth=".7" />
            <rect x="10.500" y="7" width="3.500" height="7" fill="#fff" stroke="#666" strokeWidth=".7" />
          </svg>
          <span>更多柱形图(<u>M</u>)...</span>
        </MenuFoot>
      </Menu>

      <Tooltip>
        <TipTitle>簇状柱形图</TipTitle>
        使用此图表类型:<br />
        • 跨若干类别比较值。<br />
        在下列情况下使用它:<br />
        • 类别的顺序不重要。
      </Tooltip>

      <RedBox $x={101} $y={35} $w={43} $h={32} />
      <RedBox $x={381} $y={58} $w={48} $h={34} />
      <RedBox $x={381} $y={110} $w={66} $h={63} />
      <Badge $x={151} $y={24}>2</Badge>
      <Badge $x={437} $y={48}>3</Badge>
      <Badge $x={461} $y={171}>4</Badge>
      <Badge $x={57} $y={463}>1</Badge>

      <Brand>
        <BrandCn>我爱分享网</BrandCn>
        <BrandUrl>www.zhanshaoyi.com</BrandUrl>
      </Brand>

      <Watermark>
        <svg width="42" height="36" viewBox="0 0 42 36" fill="rgba(120,120,120,.72)">
          <path d="M15 2C7 2 1 7 1 13.500c0 3.600 2 6.800 5 9L5 27l5-2.500c1.500.5 3 .7 5 .7l1 0C15 18 21 12 29 12 28 6.500 22 2 15 2z" />
          <ellipse cx="28.500" cy="24" rx="12.500" ry="10.500" />
          <circle cx="10" cy="10" r="1.700" fill="#fff" /><circle cx="20" cy="10" r="1.700" fill="#fff" />
          <circle cx="24" cy="22" r="1.400" fill="#fff" /><circle cx="33" cy="22" r="1.400" fill="#fff" />
        </svg>
        <span>公众号<WaterDot>·</WaterDot>软件智库</span>
      </Watermark>
    </Window>
  );
}
